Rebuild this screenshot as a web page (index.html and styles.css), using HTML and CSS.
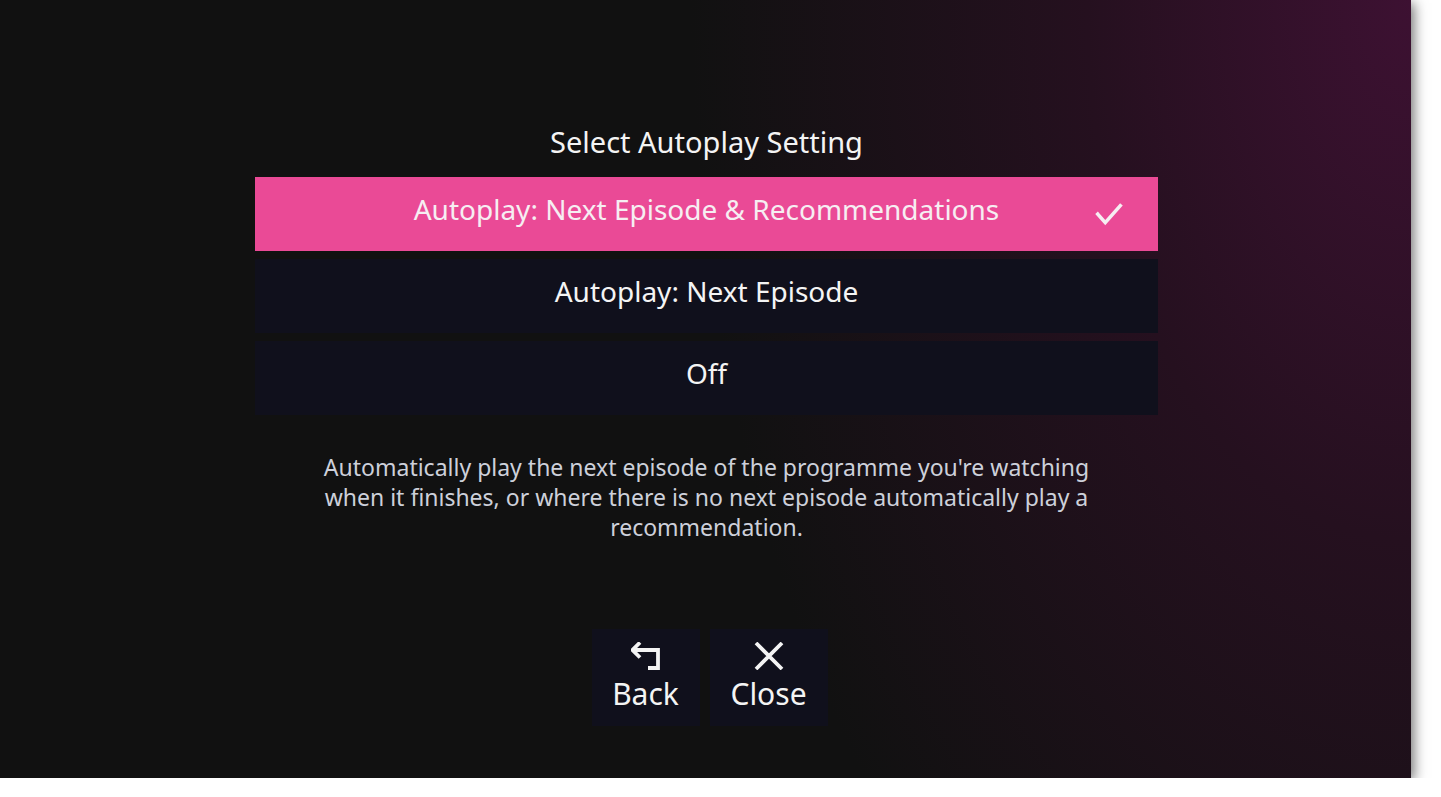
FILE: index.html
```html
<!DOCTYPE html>
<html lang="en">
<head>
<meta charset="utf-8">
<title>Autoplay Setting</title>
<link rel="stylesheet" href="styles.css">
</head>
<body>
<div class="screen">
  <main class="dialog">
    <h1 class="dialog-title">Select Autoplay Setting</h1>
    <ul class="options">
      <li class="option option-selected">
        <span class="option-label">Autoplay: Next Episode &amp; Recommendations</span>
        <svg class="option-check" viewBox="0 0 32 32" aria-hidden="true">
          <path d="M4 14 L12 23 L28 5" fill="none" stroke="currentColor" stroke-width="3.8" stroke-linecap="square"/>
        </svg>
      </li>
      <li class="option"><span class="option-label">Autoplay: Next Episode</span></li>
      <li class="option"><span class="option-label">Off</span></li>
    </ul>
    <p class="description">Automatically play the next episode of the programme you're watching when it finishes, or where there is no next episode automatically play a recommendation.</p>
    <div class="actions">
      <button class="action action-back">
        <svg class="action-icon" viewBox="0 0 30 28" aria-hidden="true">
          <path d="M9 0.5 L1.5 8 L9 15.5 M1.5 8 H27 V26 H17" fill="none" stroke="currentColor" stroke-width="3.8" stroke-linejoin="miter"/>
        </svg>
        <span>Back</span>
      </button>
      <button class="action action-close">
        <svg class="action-icon" viewBox="0 0 30 28" aria-hidden="true">
          <path d="M2 1 L28 27 M28 1 L2 27" fill="none" stroke="currentColor" stroke-width="3.8"/>
        </svg>
        <span>Close</span>
      </button>
    </div>
  </main>
</div>
</body>
</html>
```

FILE: styles.css
```css
html, body {
  margin: 0;
  padding: 0;
  background: #ffffff;
}

body {
  font-family: "Noto Sans", "Open Sans", sans-serif;
  color: #f4f4f4;
}

.screen {
  width: 1411px;
  height: 778px;
  box-sizing: border-box;
  padding-left: 2px;
  background: radial-gradient(ellipse 720px 1200px at 100% 0%, #3d1132 0%, #25101f 45%, #111111 100%);
  background-color: #111111;
  box-shadow: 3px 3px 12px rgba(0, 0, 0, 0.55);
  display: flex;
  justify-content: center;
}

.dialog {
  width: 903px;
  padding-top: 122px;
  display: flex;
  flex-direction: column;
  align-items: center;
}

.dialog-title {
  margin: 0 0 15px;
  font-size: 29px;
  font-weight: 400;
  line-height: 40px;
  text-align: center;
}

.options {
  list-style: none;
  margin: 0;
  padding: 0;
  width: 100%;
  display: flex;
  flex-direction: column;
  gap: 8px;
}

.option {
  height: 74px;
  background: #10101c;
  display: flex;
  align-items: center;
  justify-content: center;
  position: relative;
  font-size: 28px;
  line-height: 40px;
}

.option-label {
  margin-top: -11px;
}

.option-selected {
  background: #ea4a96;
  color: #f6eef2;
}

.option-check {
  position: absolute;
  right: 34px;
  top: 24px;
  width: 30px;
  height: 30px;
  color: #f6eef2;
}

.description {
  margin: 37px 0 0;
  width: 780px;
  font-size: 23px;
  line-height: 30px;
  color: #cdd0da;
  text-align: center;
}

.actions {
  margin-top: 87px;
  margin-left: 6px;
  display: flex;
  gap: 10px;
}

.action {
  font-family: inherit;
  border: 0;
  background: #10101c;
  color: #f4f4f4;
  height: 97px;
  padding: 13px 0 0;
  display: flex;
  flex-direction: column;
  align-items: center;
  font-size: 30px;
  line-height: 36px;
}

.action-back {
  width: 108px;
}

.action-close {
  width: 118px;
}

.action-icon {
  width: 30px;
  height: 28px;
  margin-bottom: 6px;
}
```
